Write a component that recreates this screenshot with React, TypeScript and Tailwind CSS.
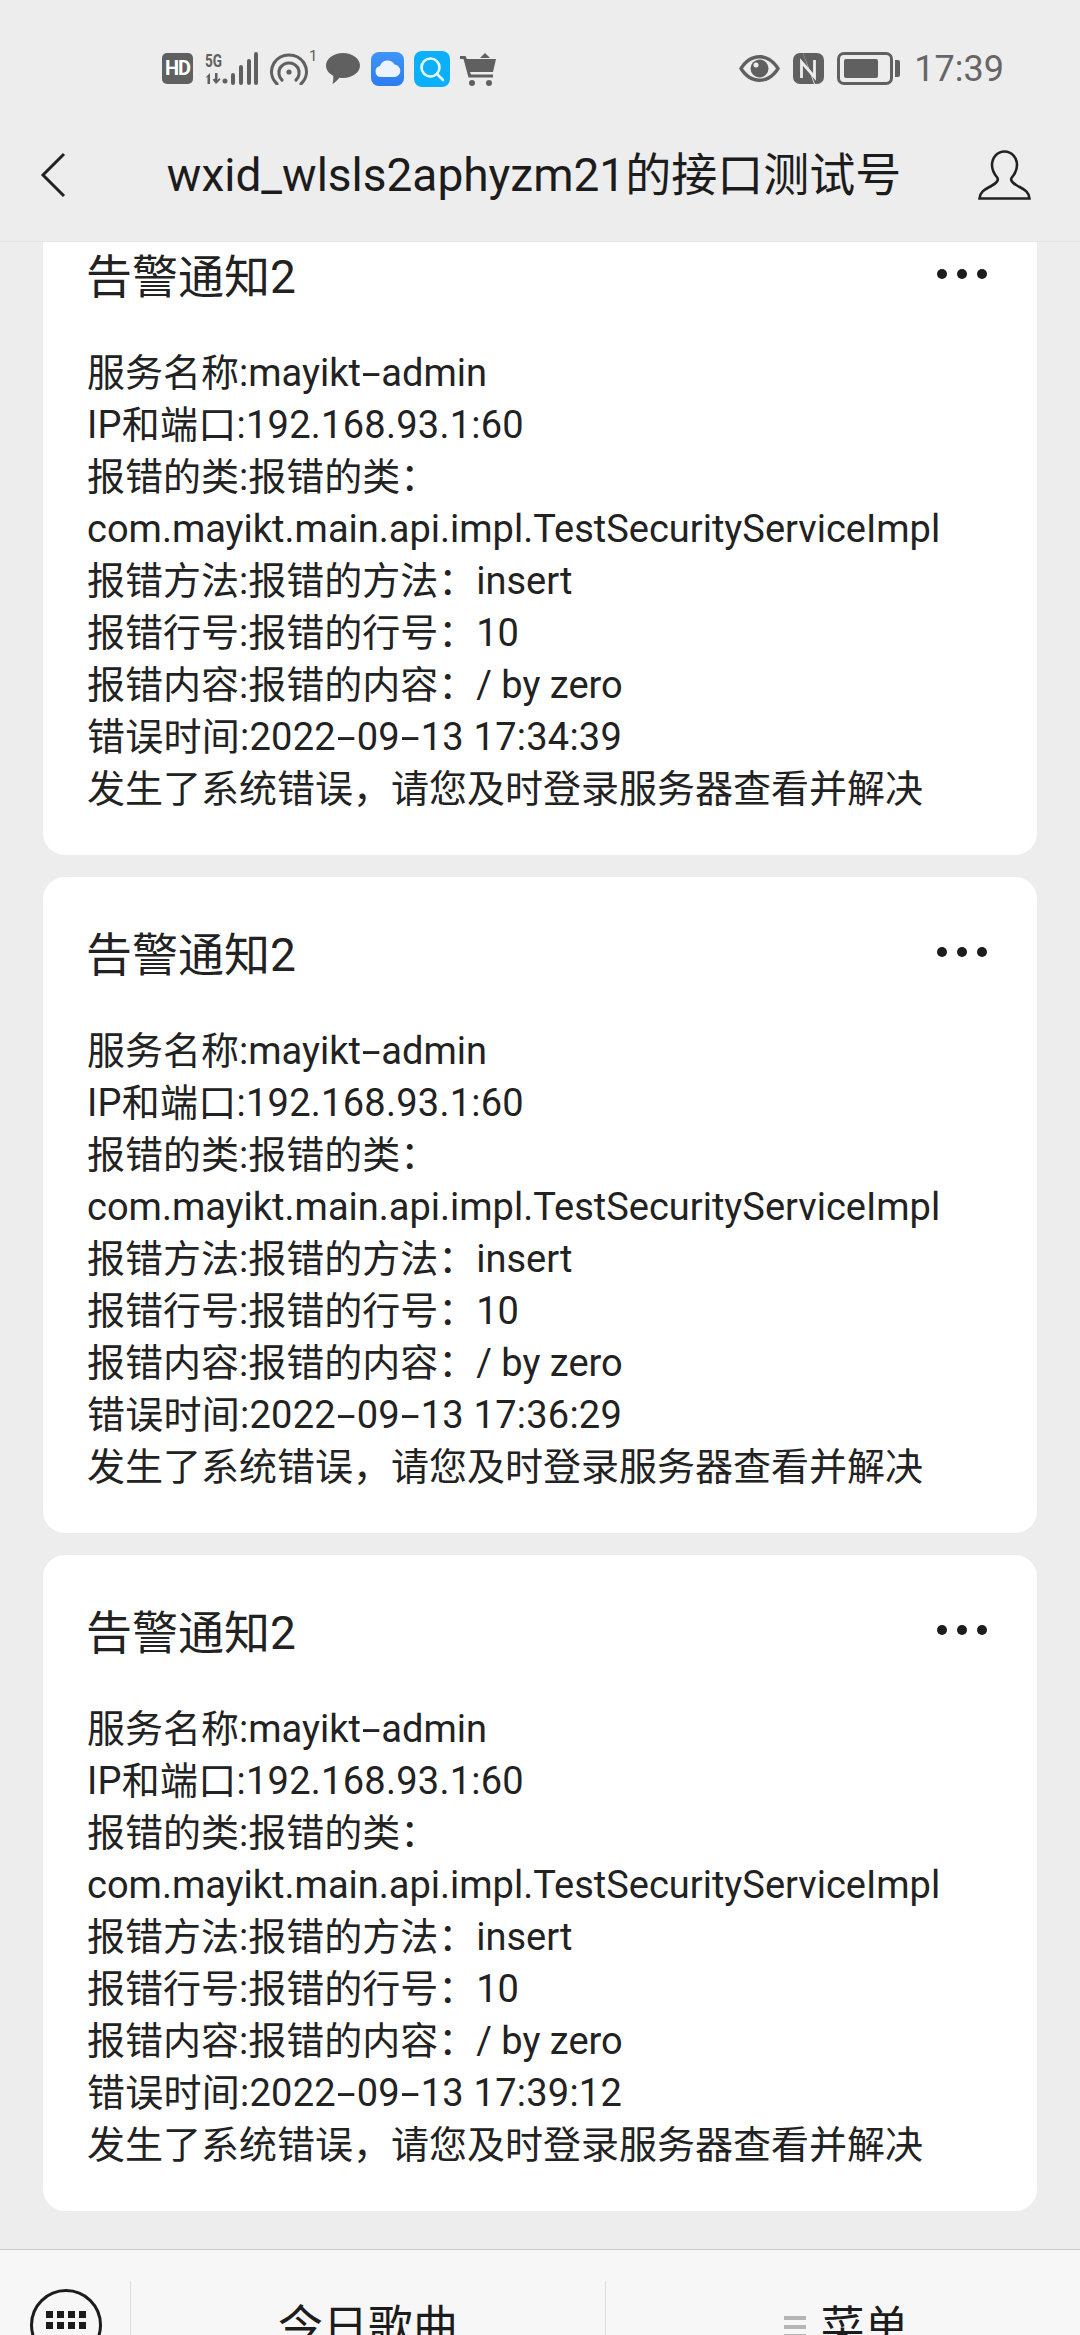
import React from "react";

const FONT = "font-['Roboto','Noto_Sans_CJK_SC',sans-serif]";

const Spaced = ({ text }: { text: string }) => (
  <>
    {text.split("-").map((part, i) => (
      <React.Fragment key={i}>
        {i > 0 && <span className="inline-block mx-[5px] scale-x-[1.8]">-</span>}
        {part}
      </React.Fragment>
    ))}
  </>
);

const AlertCard = ({ time }: { time: string }) => {
  const lines = [
    "服务名称:mayikt-admin",
    "IP和端口:192.168.93.1:60",
    "报错的类:报错的类：",
    "com.mayikt.main.api.impl.TestSecurityServiceImpl",
    "报错方法:报错的方法：insert",
    "报错行号:报错的行号：10",
    "报错内容:报错的内容：/ by zero",
    `错误时间:${time}`,
    "发生了系统错误，请您及时登录服务器查看并解决",
  ];
  return (
    <div className="bg-white rounded-[22px] pl-[44px] pr-[50px] pt-[48px] pb-[40px] h-[656px] shrink-0">
      <div className="flex items-center justify-between h-[60px]">
        <h2 className="text-[46px] leading-[60px] text-[#222] font-normal -ml-[1px]">告警通知2</h2>
        <div className="flex gap-[10px] -mt-[6px]">
          <span className="w-[10px] h-[10px] rounded-full bg-[#1c1c1c]" />
          <span className="w-[10px] h-[10px] rounded-full bg-[#1c1c1c]" />
          <span className="w-[10px] h-[10px] rounded-full bg-[#1c1c1c]" />
        </div>
      </div>
      <div className="mt-[40px] text-[38px] leading-[52px] text-[#222]">
        {lines.map((line, i) => (
          <p key={line} className={i === 1 || i === 7 ? "whitespace-nowrap tracking-[0.25px]" : "whitespace-nowrap"}>
            <Spaced text={line} />
          </p>
        ))}
      </div>
    </div>
  );
};

const StatusLeft = () => (
  <div className="flex items-center">
    <div className="w-[31px] h-[31px] rounded-[5px] bg-[#606060] text-white text-[20px] font-bold leading-[31px] text-center tracking-[-1px]">
      HD
    </div>
    <svg className="ml-[12px] overflow-visible" width="53" height="33" viewBox="0 0 53 33" fill="#606060">
      <text x="0" y="15" fontSize="19" fontWeight="700" textLength="17" lengthAdjust="spacingAndGlyphs">5G</text>
      <path d="M2 24l3-3v11h-2.500v-7l-2 1zM10 21h2.500v7l2-2 1 1.500-4.500 4.500-3.500-4.500 2.500-1z" />
      <circle cx="20" cy="29" r="2.500" />
      <rect x="26" y="21" width="4" height="12" rx="2" />
      <rect x="34" y="13" width="4" height="20" rx="2" />
      <rect x="42" y="7" width="4" height="26" rx="2" />
      <rect x="49" y="0" width="4" height="33" rx="2" />
    </svg>
    <svg className="ml-[12px]" width="38" height="32" viewBox="0 0 38 32" fill="none" stroke="#606060" strokeWidth="3.200" strokeLinecap="round">
      <path d="M7 31C1 25 0 17 4 10 8 4 13 2 19 2s11 2 15 8c4 7 3 15-3 21" />
      <path d="M12 27c-3-3-4-8-2-12 2-3 5-5 9-5s7 2 9 5c2 4 1 9-2 12" />
      <circle cx="19" cy="19" r="2.600" fill="#606060" stroke="none" />
    </svg>
    <span className="text-[15px] leading-none text-[#606060] self-start -mt-[2px] ml-[1px] w-[9px]">1</span>
    <svg className="ml-[8px]" width="34" height="31" viewBox="0 0 34 31" fill="#606060">
      <path d="M17 0c9.400 0 17 5.600 17 12.600S26.400 25 17 25c-1.200 0-2.400-.1-3.500-.3C11 27.500 8.500 30 6.500 31c.6-2 1-5 .7-8.200C2.800 20.600 0 17 0 12.600 0 5.600 7.600 0 17 0z" />
    </svg>
    <div className="ml-[11px] w-[33px] h-[34px] rounded-[8px] bg-gradient-to-b from-[#3f95f7] to-[#2c7bf2] flex items-center justify-center">
      <svg width="26" height="17" viewBox="0 0 26 17">
        <path d="M6 17a5.500 5.500 0 0 1-1-10.900A8 8 0 0 1 19.500 4.500 6.300 6.300 0 0 1 20 17z" fill="#eaf3fe" />
      </svg>
    </div>
    <div className="ml-[10px] w-[36px] h-[36px] rounded-[8px] bg-[#0cb0fa] flex items-center justify-center">
      <svg width="26" height="26" viewBox="0 0 26 26" fill="none" stroke="#e6fbff" strokeWidth="2.600" strokeLinecap="round">
        <circle cx="11.500" cy="11.500" r="9" />
        <path d="M18 18l6 6" />
      </svg>
    </div>
    <svg className="ml-[10px]" width="36" height="34" viewBox="0 0 36 34" fill="#606060">
      <path d="M0 4h5.500l1.500 3h29l-3 13H10l1 2.500h22v3H8.500L3.500 7H0z" />
      <path d="M20 6l5-5 5 5z" />
      <circle cx="12" cy="31" r="3" />
      <circle cx="29" cy="31" r="3" />
    </svg>
  </div>
);

const StatusRight = () => (
  <div className="flex items-center">
    <svg width="41" height="27" viewBox="0 0 41 27">
      <path d="M0 13.500C5 5 12 0 20.500 0S36 5 41 13.500C36 22 29 27 20.500 27S5 22 0 13.500z" fill="#606060" />
      <path d="M4 13.500C8.500 7 14 3.500 20.500 3.500S32.500 7 37 13.500C32.500 20 27 23.500 20.500 23.500S8.500 20 4 13.500z" fill="#ededed" />
      <circle cx="20.500" cy="13.500" r="9" fill="#606060" />
      <circle cx="17" cy="10" r="2.500" fill="#ededed" />
    </svg>
    <svg className="ml-[12px]" width="32" height="31" viewBox="0 0 32 31">
      <path d="M8 0h3l11 31H8a7 7 0 0 1-7-7V7a7 7 0 0 1 7-7z" fill="#606060" />
      <path d="M21 0h4a7 7 0 0 1 7 7v17a7 7 0 0 1-7 7h-2L11 0z" fill="#606060" />
      <path d="M9.500 25V9l13 15V7" fill="none" stroke="#ededed" strokeWidth="2.800" />
    </svg>
    <div className="ml-[13px] flex items-center">
      <div className="w-[56px] h-[33px] rounded-[7px] border-[3px] border-[#606060] p-[4px]">
        <div className="w-[34px] h-full rounded-[2px] bg-[#606060]" />
      </div>
      <div className="ml-[2px] w-[5px] h-[17px] rounded-r-[2px] bg-[#606060]" />
    </div>
    <span className="ml-[14px] text-[36px] leading-none text-[#666]">17:39</span>
  </div>
);

const App = () => {
  return (
    <div className={`${FONT} w-[1080px] h-[2335px] bg-[#ededed] flex flex-col overflow-hidden`}>
      <header className="h-[242px] shrink-0 border-b border-[#e6e6e6] flex flex-col relative z-10 bg-[#ededed]">
        <div className="flex items-center justify-between pl-[162px] pr-[76px] pt-[50px] h-[87px]">
          <StatusLeft />
          <StatusRight />
        </div>
        <div className="flex items-center justify-between pl-[40px] pr-[49px] mt-[58px]">
          <svg width="26" height="46" viewBox="0 0 26 46" fill="none" stroke="#222" strokeWidth="3">
            <path d="M24 2L3 23l21 21" />
          </svg>
          <h1 className="ml-[24px] text-[46px] leading-[60px] text-[#1c1c1c] font-normal whitespace-nowrap">
            wxid_wlsls2aphyzm21的接口测试号
          </h1>
          <svg width="53" height="50" viewBox="0 0 53 50" fill="none" stroke="#222" strokeWidth="2.600">
            <path d="M26.500 1.500C19 1.500 14 8 14 15c0 6 3 10 5.500 13 1.500 3-1 5-5.500 7.500C8 39 2 41 1.500 48.500h50C51 41 45 39 39 35.500c-4.500-2.500-7-4.500-5.500-7.500C36 25 39 21 39 15c0-7-5-13.500-12.500-13.500z" />
          </svg>
        </div>
      </header>

      <main className="flex-1 min-h-0 overflow-hidden px-[43px]">
        <div className="-mt-[43px] flex flex-col gap-[22px]">
          <AlertCard time="2022-09-13 17:34:39" />
          <AlertCard time="2022-09-13 17:36:29" />
          <AlertCard time="2022-09-13 17:39:12" />
        </div>
      </main>

      <footer className="h-[86px] shrink-0 bg-[#f7f7f7] border-t border-[#c9c9c9] flex overflow-hidden">
        <div className="w-[130px] shrink-0 pl-[30px] pt-[39px]">
          <div className="w-[72px] h-[72px] rounded-full border-[3px] border-[#1c1c1c] flex items-start justify-center pt-[19px]">
            <div className="grid grid-cols-4 gap-[4px]">
              {Array.from({ length: 8 }).map((_, i) => (
                <span key={i} className="w-[7px] h-[7px] bg-[#1c1c1c]" />
              ))}
            </div>
          </div>
        </div>
        <div className="w-[475px] shrink-0 mt-[31px] border-l border-[#dcdcdc] flex justify-center pt-[24px] text-[45px] leading-[46px] text-[#1c1c1c]">
          今日歌曲
        </div>
        <div className="flex-1 mt-[31px] border-l border-[#dcdcdc] flex justify-center items-start gap-[15px] pt-[24px] pl-[6px] text-[44px] leading-[46px] text-[#1c1c1c]">
          <div className="flex flex-col gap-[5px] pt-[11px]">
            <span className="w-[22px] h-[4px] bg-[#b5b5b5]" />
            <span className="w-[22px] h-[4px] bg-[#b5b5b5]" />
            <span className="w-[22px] h-[4px] bg-[#b5b5b5]" />
          </div>
          菜单
        </div>
      </footer>
    </div>
  );
};

export default App;
